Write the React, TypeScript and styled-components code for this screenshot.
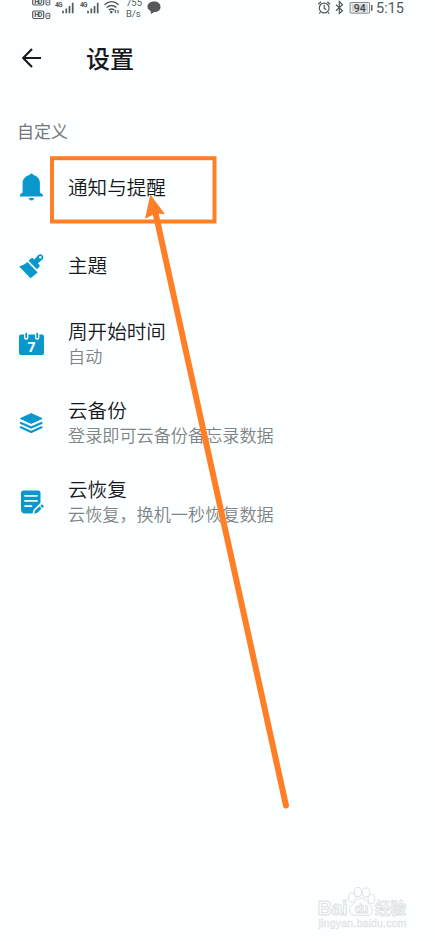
import React from "react";
import styled, { createGlobalStyle } from "styled-components";

const GlobalStyle = createGlobalStyle`
  * { box-sizing: border-box; }
  body { margin: 0; background: #fbffff; }
`;

const Screen = styled.main`
  position: relative;
  width: 435px;
  height: 941px;
  overflow: hidden;
  background: #fbffff;
  font-family: "Noto Sans CJK SC", sans-serif;
  color: #17171c;
`;

const StatusBar = styled.header`
  display: flex;
  justify-content: space-between;
  height: 22px;
  padding: 0 31px 0 32px;
  overflow: hidden;
  font-family: Roboto, sans-serif;
  color: #55595b;
`;

const StatusGroup = styled.div`
  display: flex;
  height: 22px;
`;

const Rate = styled.div`
  width: 21px;
  margin-top: -3px;
  font-size: 9.5px;
  line-height: 11px;
`;

const Clock = styled.span`
  margin-left: 3px;
  font-size: 14.5px;
  line-height: 17px;
`;

const AppBar = styled.div`
  display: flex;
  align-items: center;
  height: 72px;
  padding-left: 21px;
`;

const Title = styled.h1`
  margin: 0 0 0 44px;
  font-size: 24px;
  line-height: 36px;
  font-weight: 500;
`;

const Section = styled.h2`
  margin: 25px 0 5px 17px;
  font-size: 17px;
  line-height: 24px;
  font-weight: 400;
  color: #74777a;
`;

const Row = styled.section`
  display: flex;
  align-items: center;
  height: 78.6px;
`;

const IconSlot = styled.div`
  display: flex;
  width: 68px;
  padding-left: 17px;
`;

const RowText = styled.div`
  padding-bottom: 2px;
`;

const RowTitle = styled.div`
  font-size: 19.6px;
  line-height: 25px;
  font-weight: 350;
`;

const RowNote = styled.div`
  font-size: 17.15px;
  line-height: 25px;
  font-weight: 350;
  color: #808386;
`;

const Highlight = styled.svg`
  position: absolute;
  inset: 0;
`;

const Watermark = styled.svg`
  position: absolute;
  left: 312px;
  top: 882px;
`;

const BLUE = "#0a98cc";
const PALE = "#fbffff";

const Glyph = ({ children }: { children: React.ReactNode }) => (
  <svg width="28" height="28" viewBox="0 0 28 28" fill={BLUE}>{children}</svg>
);

const Bell = () => (
  <Glyph>
    <path d="M12.5 2.1a2 2 0 0 1 3.9 0c4 1 6.5 4.1 6.5 8v9.4l2.9 1.9v2H3v-2l2.6-1.900v-9.400c0-3.900 2.900-7 6.900-8z" />
    <path d="M11.700 25h5.600c-.4 1.500-1.400 2.500-2.800 2.500s-2.400-1-2.800-2.500z" />
  </Glyph>
);

const Brush = () => (
  <Glyph>
    <path d="M2.2 14.400c3-.8 5.800-2 8.200-4.300l10.300 10.300-7.200 5.800z" />
    <path d="M11.600 8.800l2.200-2.200c.8-.8 1.700-.8 2.500 0l1 1 4-4.700a3.100 3.100 0 0 1 4.200 4.500l-4.600 3.900 1.200 1.300c.8.8.8 1.600 0 2.400l-2.200 2.200z" />
    <circle cx="23.300" cy="5.300" r="1.200" fill={PALE} />
  </Glyph>
);

const Calendar = () => (
  <Glyph>
    <rect x="2" y="4.600" width="25" height="20.500" rx="2" />
    <path d="M9.200 3v4.600M20.200 3v4.600" stroke={PALE} strokeWidth="4.400" strokeLinecap="round" />
    <path d="M9.200 3.600v3.600M20.200 3.600v3.600" stroke={BLUE} strokeWidth="1.800" strokeLinecap="round" />
    <text x="14.400" y="22.400" textAnchor="middle" fontFamily="Open Sans" fontSize="14" fontWeight="700" fill={PALE}>7</text>
  </Glyph>
);

const Layers = () => (
  <Glyph>
    <path d="M14.200 4.600l10.900 4.900-10.900 4.900L3.400 9.500z" stroke={BLUE} strokeLinejoin="round" />
    <path d="M3.900 14l10.300 4.600L24.500 14M3.900 18.300l10.300 4.600 10.300-4.600" fill="none" stroke={BLUE} strokeWidth="2.200" strokeLinecap="round" strokeLinejoin="round" />
  </Glyph>
);

const Note = () => (
  <Glyph>
    <path d="M6.500 2.500h14.500a2.500 2.500 0 0 1 2.500 2.500v9.800L16.500 22l-1 3.500H8c-2.800 0-4-1.700-4-4V5c0-1.600.9-2.500 2.500-2.500z" />
    <path d="M8 7.800h12M8 12.900h12M8 18.100h6.500" stroke={PALE} strokeWidth="1.700" strokeLinecap="round" />
    <path d="M17.200 25.800l.7-3.100 4.600-4.200 2.100 2.100-4.300 4.200zM23.300 17.900l1-1c.6-.5 1-.5 1.500 0l.6.6c.5.5.5 1 0 1.500l-1 1z" />
  </Glyph>
);

const items = [
  { icon: <Bell />, title: "通知与提醒" },
  { icon: <Brush />, title: "主題" },
  { icon: <Calendar />, title: "周开始时间", note: "自动" },
  { icon: <Layers />, title: "云备份", note: "登录即可云备份备忘录数据" },
  { icon: <Note />, title: "云恢复", note: "云恢复，换机一秒恢复数据" },
];

const SignalIcons = () => (
  <svg width="94" height="22" viewBox="32 0 94 22" fill="#55595b">
    {[-3, 10.5].map((y) => (
      <g key={y}>
        <rect x="32.700" y={y + 0.5} width="11" height="7.500" rx="1.500" fill="none" stroke="#55595b" strokeWidth="1.200" />
        <text x="34.200" y={y + 6.8} fontSize="7" fontWeight="800" textLength="8">HD</text>
        <rect x="46" y={y + 2.8} width="3.800" height="5.200" rx=".7" fill="none" stroke="#55595b" />
        <path d={`M47 ${y + 5.4}h2`} stroke="#55595b" strokeWidth=".8" />
      </g>
    ))}
    {[0, 25].map((x) => (
      <g key={x}>
        <text x={55 + x} y="6.700" fontSize="6.600" fontWeight="700" textLength="7.500">4G</text>
        <path d={`M${63 + x} 13.300v-2.500M${66.3 + x} 13.300V8.500M${69.5 + x} 13.300V6M${72.7 + x} 13.300V2.700`} stroke="#55595b" strokeWidth="1.700" />
      </g>
    ))}
    <g fill="none" stroke="#55595b" strokeWidth="1.500">
      <path d="M104.500 4.700c4.500-3.800 10-3.800 14 0M106.600 7.500c3.200-2.600 6.800-2.600 9.800 0M108.900 10.100c1.700-1.300 3.600-1.300 5.200 0" />
    </g>
    <circle cx="111.300" cy="12.100" r="1.300" />
    <path d="M115.300 13V9.800M118 10v3.200" stroke="#55595b" strokeWidth="1.200" />
  </svg>
);

const Bubble = () => (
  <svg width="16" height="16" viewBox="0 0 16 16" fill="#55595b">
    <path d="M7 1.600c4 0 6.500 2 6.500 5.300 0 3.100-2.500 5-6 5.200L3.800 14v-2.800C1.700 10.200.5 8.800.5 6.800.5 3.700 3.100 1.600 7 1.600z" />
  </svg>
);

const DeviceIcons = () => (
  <svg width="56" height="18" viewBox="317.500 0 56 18" fill="none" stroke="#55595b" strokeWidth="1.200">
    <circle cx="324.700" cy="8" r="4.900" />
    <path d="M324.700 4.800v3.500l2 1.500M318.800 4.300l2.800-2.500M327.800 1.800l2.800 2.500M320.800 12.400l-1 1.200M328.600 12.400l1 1.200" />
    <path d="M336.500 4.700l6.500 6-3.200 2.800V1.500L343 4.700l-6.500 6" />
    <rect x="350.600" y="2.600" width="19.500" height="10.500" rx="1" strokeWidth=".8" />
    <rect x="352.200" y="4.200" width="16.300" height="7.300" fill="#cdd1d2" stroke="none" />
    <path d="M372.300 5v5.800" strokeWidth="1.400" />
    <text x="360.200" y="11.600" textAnchor="middle" fontSize="10.500" fontWeight="500" fill="#45494b" stroke="none">94</text>
  </svg>
);

export default function App() {
  return (
    <Screen>
      <GlobalStyle />
      <StatusBar>
        <StatusGroup>
          <SignalIcons />
          <Rate>755<br />B/s</Rate>
          <Bubble />
        </StatusGroup>
        <StatusGroup>
          <DeviceIcons />
          <Clock>5:15</Clock>
        </StatusGroup>
      </StatusBar>
      <AppBar>
        <svg width="21" height="20" viewBox="0 0 21 20" fill="none" stroke="#17171c" strokeWidth="2.100">
          <path d="M11 1L2.200 10l8.800 9M2.200 10H20" />
        </svg>
        <Title>设置</Title>
      </AppBar>
      <Section>自定义</Section>
      {items.map((item) => (
        <Row key={item.title}>
          <IconSlot>{item.icon}</IconSlot>
          <RowText>
            <RowTitle>{item.title}</RowTitle>
            {item.note && <RowNote>{item.note}</RowNote>}
          </RowText>
        </Row>
      ))}
      <Highlight width="435" height="941" viewBox="0 0 435 941" fill="none" stroke="#ff7f27">
        <rect x="52" y="158.200" width="162.500" height="63.300" strokeWidth="4" />
        <path d="M155.500 213L286 805.500" strokeWidth="6" strokeLinecap="round" />
        <path d="M150.300 194.500L165 214.300l-7.500-.8-4.500 1.200-8 4z" fill="#ff7f27" stroke="none" />
      </Highlight>
      <Watermark width="100" height="50" viewBox="312 882 100 50" fill={PALE} stroke="#dde1e2" fontFamily="Liberation Sans">
        <text x="317.500" y="914.500" fontSize="20" fontWeight="700" strokeWidth="1" textLength="30">Bai</text>
        <ellipse cx="352" cy="897.500" rx="3.700" ry="4.700" />
        <ellipse cx="358" cy="892" rx="3.700" ry="4.500" />
        <ellipse cx="366" cy="892.500" rx="3.700" ry="4.500" />
        <ellipse cx="371.300" cy="899" rx="3.300" ry="4.700" />
        <path d="M361.500 898c4 0 5 4 8 6.500 4.500 3.500 3.500 11-2 11-4 0-7-.8-12 0-6.500.5-8-7-3.500-10.500 3.500-2.500 5-7 9.500-7z" />
        <text x="354.500" y="913" fontSize="13" fontWeight="700" strokeWidth=".8" textLength="14">du</text>
        <text x="375" y="914" fontFamily="Noto Sans CJK SC" fontSize="15.500" fontWeight="700" strokeWidth=".8">经验</text>
        <text x="318.500" y="926.500" fontSize="10.500" fontWeight="400" strokeWidth=".4" fill="#edf1f1" textLength="88">jingyan.baidu.com</text>
      </Watermark>
    </Screen>
  );
}
